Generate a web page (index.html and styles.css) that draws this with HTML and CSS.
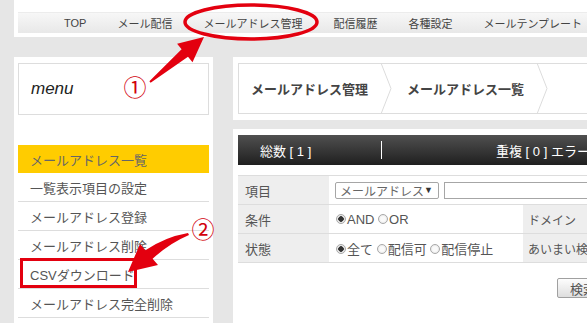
FILE: index.html
```html
<!DOCTYPE html>
<html lang="ja">
<head>
  <meta charset="UTF-8">
  <title>メールアドレス一覧</title>
  <link rel="stylesheet" href="styles.css">
</head>
<body>
  <div class="page">
    <header class="top">
      <nav class="gnav">
        <a href="#">TOP</a>
        <a href="#">メール配信</a>
        <a href="#">メールアドレス管理</a>
        <a href="#">配信履歴</a>
        <a href="#">各種設定</a>
        <a href="#">メールテンプレート</a>
      </nav>
    </header>

    <div class="wrap">
      <aside class="side">
        <div class="menu-title">menu</div>
        <ul class="side-menu">
          <li class="active">メールアドレス一覧</li>
          <li>一覧表示項目の設定</li>
          <li>メールアドレス登録</li>
          <li>メールアドレス削除</li>
          <li>CSVダウンロード</li>
          <li>メールアドレス完全削除</li>
        </ul>
      </aside>

      <main class="content">
        <div class="crumbs-panel">
          <div class="crumbs">
            <span class="crumb">メールアドレス管理
              <svg class="chev" width="12" height="51" viewBox="0 0 12 51"><path d="M1 0 L11 25.5 L1 51" fill="none" stroke="#dcdcdc" stroke-width="1"/></svg>
            </span>
            <span class="crumb">メールアドレス一覧
              <svg class="chev" width="12" height="51" viewBox="0 0 12 51"><path d="M1 0 L11 25.5 L1 51" fill="none" stroke="#dcdcdc" stroke-width="1"/></svg>
            </span>
          </div>
        </div>

        <div class="panel">
          <div class="summary">
            <span class="total">総数 [ 1 ]</span>
            <span class="sep"></span>
            <span class="dup">重複 [ 0 ] エラー [ 0 ]</span>
          </div>

          <table class="search">
            <tr>
              <th>項目</th>
              <td colspan="3" class="plain">
                <span class="select">メールアドレス <i>▼</i></span><span class="text-input"></span>
              </td>
            </tr>
            <tr>
              <th>条件</th>
              <td class="val"><span class="radio on"></span>AND <span class="radio"></span>OR</td>
              <th class="sub">ドメイン</th>
              <td></td>
            </tr>
            <tr>
              <th>状態</th>
              <td class="val"><span class="radio on"></span>全て <span class="radio"></span>配信可 <span class="radio"></span>配信停止</td>
              <th class="sub">あいまい検索</th>
              <td></td>
            </tr>
          </table>

          <div class="actions">
            <button class="btn">検索</button>
          </div>
        </div>
      </main>
    </div>

    <svg class="notes" width="587" height="323" viewBox="0 0 587 323">
      <ellipse cx="251" cy="22" rx="66" ry="17" fill="none" stroke="#e3000f" stroke-width="3.5"/>
      <polygon points="149.4,81.2 181.6,49.2 177.1,43.8 204,37 192.5,62.2 188,56.8 150.6,82.8" fill="#e3000f"/>
      <text x="135" y="86" class="num">①</text>

      <rect x="21.5" y="259.5" width="114" height="27" fill="none" stroke="#e3000f" stroke-width="3"/>
      <path d="M188 233 Q165 237 145.4 250.3 L140 244 L128 272 L158 265 L152.6 258.7 Q170 243 189 235 Z" fill="#e3000f"/>
      <text x="203" y="228" class="num">②</text>
    </svg>
  </div>
</body>
</html>
```

FILE: styles.css
```css
* {
  margin: 0;
  padding: 0;
  box-sizing: border-box;
}

body {
  font-family: "Liberation Sans", "Noto Sans CJK JP", sans-serif;
  background: #e6e6e6;
  color: #555;
  overflow: hidden;
}

.page {
  position: relative;
  width: 760px;
  height: 323px;
}

/* top navigation */
.top {
  margin-left: 14px;
  height: 37px;
  background: #fff;
  padding: 12px 0 0 4px;
}

.gnav {
  display: flex;
  align-items: center;
  gap: 31px;
  height: 21px;
  padding-left: 46px;
  background: linear-gradient(to bottom, #f7f7f7, #e8e8e8);
  border-top: 1px solid #ececec;
}

.gnav a {
  color: #444;
  font-size: 11px;
  text-decoration: none;
  white-space: nowrap;
}

/* columns */
.wrap {
  display: flex;
  gap: 20px;
  margin-top: 20px;
  padding-left: 14px;
  height: 266px;
}

.side {
  width: 199px;
  flex: none;
  background: #fff;
  padding: 6px 4px;
}

.menu-title {
  height: 52px;
  border: 1px solid #ddd;
  display: flex;
  align-items: center;
  padding-left: 12px;
  font-size: 17px;
  font-style: italic;
  color: #222;
}

.side-menu {
  list-style: none;
  margin-top: 30px;
}

.side-menu li {
  height: 29px;
  display: flex;
  align-items: center;
  padding-left: 12px;
  border-bottom: 1px solid #ddd;
  font-size: 13px;
  color: #555;
}

.side-menu li.active {
  height: 28px;
  background: #ffcc00;
  border-bottom: none;
  color: #666;
}

.content {
  width: 470px;
  flex: none;
  display: flex;
  flex-direction: column;
  gap: 9px;
}

.crumbs-panel {
  background: #fff;
  padding: 6px 0 6px 5px;
}

.crumbs {
  display: flex;
  height: 51px;
  border: 1px solid #ddd;
  border-right: none;
}

.crumb {
  display: flex;
  align-items: center;
  padding-left: 12px;
  font-size: 13px;
  font-weight: bold;
  color: #444;
  white-space: nowrap;
}

.crumb + .crumb {
  padding-left: 15px;
}

.crumb .chev {
  margin-left: 12px;
  margin-top: -1px;
}

.panel {
  flex: 1;
  background: #fff;
  padding: 6px 0 0 5px;
}

.summary {
  display: flex;
  align-items: center;
  height: 30px;
  padding-left: 22px;
  background: linear-gradient(to bottom, #505050, #1f1f1f);
  color: #fff;
  font-size: 13px;
  white-space: nowrap;
}

.summary .total {
  width: 121px;
}

.summary .sep {
  width: 1px;
  height: 18px;
  background: #fff;
}

.summary .dup {
  margin-left: 114px;
}

/* search form */
.search {
  margin-top: 10px;
  width: 100%;
  border-collapse: collapse;
  font-size: 13px;
  color: #555;
}

.search th,
.search td {
  height: 29px;
  border-top: 1px solid #ddd;
  border-bottom: 1px solid #ddd;
  text-align: left;
  font-weight: normal;
  white-space: nowrap;
}

.search th {
  width: 91px;
  padding-left: 7px;
  background: #eee;
}

.search th.sub {
  width: 80px;
  padding-left: 5px;
  font-size: 12px;
}

.search td.val {
  width: 194px;
  padding-left: 7px;
}

.search td.plain {
  padding-left: 6px;
  font-size: 0;
}

.select {
  display: inline-flex;
  align-items: center;
  justify-content: space-between;
  width: 104px;
  height: 17px;
  padding: 0 6px 0 4px;
  border: 1px solid #a6a6a6;
  border-radius: 2px;
  font-size: 12px;
  color: #666;
  vertical-align: middle;
}

.select i {
  font-style: normal;
  font-size: 9px;
  color: #333;
}

.text-input {
  display: inline-block;
  width: 150px;
  height: 17px;
  margin-left: 5px;
  border: 1px solid #a6a6a6;
  vertical-align: middle;
}

.radio {
  display: inline-block;
  width: 10px;
  height: 10px;
  margin-right: 1px;
  border: 1px solid #a9a9a9;
  border-radius: 50%;
  background: radial-gradient(circle, #fafafa 40%, #dcdcdc 100%);
  vertical-align: 0;
}

.radio.on {
  background: radial-gradient(circle, #333 2.5px, #e9e9e9 3px);
}

.actions {
  padding: 15px 0 25px 319px;
  border-bottom: 1px solid #ddd;
}

.btn {
  display: block;
  height: 20px;
  padding: 0 12px;
  border: 1px solid #a0a0a0;
  border-radius: 2px;
  background: linear-gradient(to bottom, #fdfdfd, #dedede);
  font-family: "Liberation Sans", "Noto Sans CJK JP", sans-serif;
  font-size: 13px;
  color: #555;
}

/* red annotations lying over the screenshot */
.notes {
  position: absolute;
  left: 0;
  top: 0;
  pointer-events: none;
}

.notes .num {
  font-family: "Noto Sans CJK JP", sans-serif;
  font-size: 23px;
  fill: #d2000c;
  text-anchor: middle;
  dominant-baseline: central;
}
```
